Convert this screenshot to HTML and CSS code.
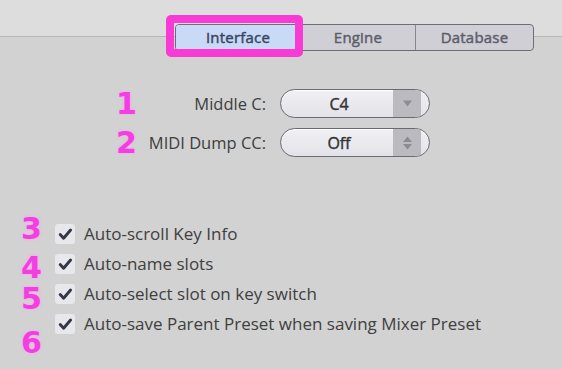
FILE: index.html
```html
<!DOCTYPE html>
<html>
<head>
<meta charset="utf-8">
<link rel="stylesheet" href="styles.css">
</head>
<body>
<div class="header">
  <div class="tabs">
    <div class="tab active">Interface</div>
    <div class="tab">Engine</div>
    <div class="tab">Database</div>
    <div class="highlight"></div>
  </div>
</div>

<div class="form">
  <div class="row">
    <span class="num">1</span>
    <span class="label">Middle C:</span>
    <div class="select">
      <span class="value">C4</span>
      <span class="arrow">
        <svg width="9" height="7" viewBox="0 0 9 7"><path d="M0 0.5 H9 L4.5 6.5 Z" fill="#8c8c97"/></svg>
      </span>
    </div>
  </div>
  <div class="row">
    <span class="num">2</span>
    <span class="label">MIDI Dump CC:</span>
    <div class="select">
      <span class="value">Off</span>
      <span class="arrow">
        <svg width="9" height="14" viewBox="0 0 9 14"><path d="M0 6 H9 L4.5 0.5 Z" fill="#8c8c97"/><path d="M0 8 H9 L4.5 13.5 Z" fill="#8c8c97"/></svg>
      </span>
    </div>
  </div>
</div>

<div class="options">
  <div class="nums">
    <span class="num big n3">3</span>
    <span class="num big n4">4</span>
    <span class="num big n5">5</span>
    <span class="num big n6">6</span>
  </div>
  <div class="checks">
    <div class="check-row">
      <span class="box"><svg width="20" height="20" viewBox="0 0 20 20"><path d="M5.2 10.6 L8.6 14.2 L15.6 6" fill="none" stroke="#343846" stroke-width="2.9" stroke-linecap="round" stroke-linejoin="round"/></svg></span>
      <span class="check-label">Auto-scroll Key Info</span>
    </div>
    <div class="check-row">
      <span class="box"><svg width="20" height="20" viewBox="0 0 20 20"><path d="M5.2 10.6 L8.6 14.2 L15.6 6" fill="none" stroke="#343846" stroke-width="2.9" stroke-linecap="round" stroke-linejoin="round"/></svg></span>
      <span class="check-label">Auto-name slots</span>
    </div>
    <div class="check-row">
      <span class="box"><svg width="20" height="20" viewBox="0 0 20 20"><path d="M5.2 10.6 L8.6 14.2 L15.6 6" fill="none" stroke="#343846" stroke-width="2.9" stroke-linecap="round" stroke-linejoin="round"/></svg></span>
      <span class="check-label">Auto-select slot on key switch</span>
    </div>
    <div class="check-row">
      <span class="box"><svg width="20" height="20" viewBox="0 0 20 20"><path d="M5.2 10.6 L8.6 14.2 L15.6 6" fill="none" stroke="#343846" stroke-width="2.9" stroke-linecap="round" stroke-linejoin="round"/></svg></span>
      <span class="check-label">Auto-save Parent Preset when saving Mixer Preset</span>
    </div>
  </div>
</div>
</body>
</html>
```
FILE: styles.css
```css
* { box-sizing: border-box; }
html, body { margin: 0; padding: 0; }
body {
  width: 562px;
  height: 369px;
  overflow: hidden;
  font-family: "Open Sans", "Noto Sans", sans-serif;
  background: linear-gradient(to bottom, #dddddd 0, #dddddd 36px, #b6b6b6 36px, #b6b6b6 37px, #d2d2d2 37px, #d2d2d2 100%);
}
.header {
  padding-top: 24px;
  padding-left: 175px;
}
.tabs {
  position: relative;
  display: flex;
  width: 359px;
  height: 27px;
  border: 1px solid #6e6e78;
  border-radius: 4px;
  background: #cfcfd5;
}
.tab {
  display: flex;
  align-items: center;
  justify-content: center;
  font-size: 15px;
  font-weight: 400;
  -webkit-text-stroke: 0.45px currentColor;
  letter-spacing: 0.2px;
  color: #5d5d6b;
  width: 115px;
  padding-bottom: 2px;
}
.tab:first-child { width: 124px; }
.tab:nth-child(3) { width: 118px; }
.tab + .tab { border-left: 1px solid #85858e; }
.tab.active {
  background: #c8daf6;
  color: #3a4563;
  border-radius: 3px 0 0 3px;
}
.highlight {
  position: absolute;
  left: -10px;
  top: -10px;
  width: 137px;
  height: 42px;
  border: 8px solid #f93bd6;
  border-radius: 5px;
  -webkit-text-stroke: 0;
}
.form {
  margin-top: 38px;
  padding-left: 116px;
  display: flex;
  flex-direction: column;
  gap: 10px;
}
.row {
  display: flex;
  align-items: center;
  height: 29px;
}
.num {
  font-family: "DejaVu Sans", "Liberation Sans", sans-serif;
  font-weight: bold;
  font-size: 30px;
  line-height: 29px;
  color: #f23fe0;
  text-shadow: 0 0 2px #ff9cf4, 0 0 3px rgba(255, 170, 248, 0.8);
  width: 26px;
}
.label {
  width: 124px;
  text-align: right;
  font-size: 16.5px;
  color: #3e3e3e;
  margin-right: 14px;
  white-space: nowrap;
}
.select {
  display: flex;
  width: 150px;
  height: 29px;
  border: 1px solid #6a6a72;
  border-radius: 15px;
  overflow: hidden;
  padding-right: 8px;
  background: linear-gradient(to bottom, #f1f1f4, #e2e2e8);
  box-shadow: inset 0 1px 0 #ffffff;
}
.value {
  flex: 1;
  display: flex;
  align-items: center;
  justify-content: center;
  font-size: 16px;
  font-weight: 400;
  -webkit-text-stroke: 0.4px currentColor;
  color: #333333;
  padding-left: 4px;
}
.arrow {
  width: 28px;
  display: flex;
  align-items: center;
  justify-content: center;
  background: #bababf;
}
.options {
  margin-top: 60px;
  padding-left: 21px;
  display: flex;
}
.nums {
  display: flex;
  flex-direction: column;
  width: 34px;
}
.num.big {
  font-size: 30px;
  line-height: 24px;
  width: auto;
}
.n4 { margin-top: 15px; }
.n5 { margin-top: 7px; }
.n6 { margin-top: 20px; }
.checks {
  padding-top: 7px;
  display: flex;
  flex-direction: column;
  gap: 10px;
}
.check-row {
  display: flex;
  align-items: center;
  gap: 9px;
  height: 20px;
}
.box {
  width: 20px;
  height: 20px;
  border-radius: 3px;
  background: #e7e7ec;
  display: block;
}
.box svg { display: block; }
.check-label {
  font-size: 17px;
  color: #404040;
  line-height: 20px;
  white-space: nowrap;
}
```
